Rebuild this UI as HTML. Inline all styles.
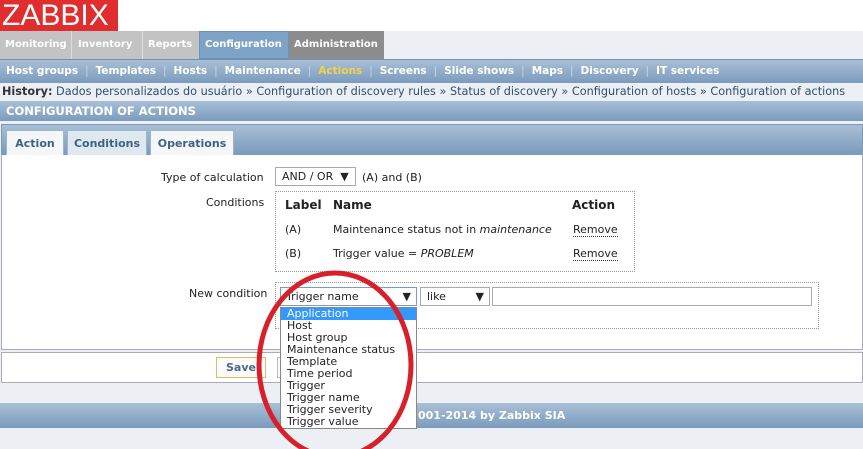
<!DOCTYPE html>
<html><head><meta charset="utf-8"><style>
*{margin:0;padding:0;box-sizing:border-box}
body{width:863px;height:449px;overflow:hidden;background:#eceff3;font-family:"DejaVu Sans","Liberation Sans",sans-serif;font-size:11px;color:#222;position:relative}
.a{position:absolute;white-space:nowrap}
.grad{background:linear-gradient(#a9bfd6,#7b9bbd)}
.b{font-weight:bold}
.s{color:#c8d6e4;font-weight:normal}
</style></head><body>
<div class="a" style="left:0;top:0;width:863px;height:31px;background:#fff"></div>
<div class="a" style="left:0;top:0;width:118px;height:31px;background:#e12d2d;color:#fff;font-family:'Liberation Sans',sans-serif;font-size:30px;line-height:31px;padding-left:2px">ZABBIX</div>
<!-- top tabs -->
<div class="a" style="left:0;top:31px;width:384px;height:28px;background:#c3c3c3"></div>
<div class="a b" style="left:0;top:31px;height:28px;line-height:28px;color:#fff;font-size:10px">
<span class="a" style="left:5px">Monitoring</span>
<span class="a" style="left:78px">Inventory</span>
<span class="a" style="left:148px">Reports</span>
</div>
<div class="a" style="left:71px;top:31px;width:1px;height:28px;background:#ddd"></div>
<div class="a" style="left:142px;top:31px;width:1px;height:28px;background:#ddd"></div>
<div class="a" style="left:199px;top:31px;width:90px;height:28px;background:#7fa3c6;border:1px solid #6d92b7"></div>
<div class="a b" style="left:205px;top:31px;line-height:28px;color:#fff;font-size:10px">Configuration</div>
<div class="a" style="left:289px;top:31px;width:95px;height:28px;background:#8c8c8c"></div>
<div class="a b" style="left:294px;top:31px;line-height:28px;color:#fff;font-size:10px">Administration</div>
<!-- sub menu -->
<div class="a grad" style="left:0;top:59px;width:863px;height:24px;border-top:1px solid #6d92b7"></div>
<div class="a b" style="left:6px;top:59px;line-height:24px;color:#fff;font-size:10.5px">Host groups <span class="s">&nbsp;|&nbsp;</span> Templates <span class="s">&nbsp;|&nbsp;</span> Hosts <span class="s">&nbsp;|&nbsp;</span> Maintenance <span class="s">&nbsp;|&nbsp;</span> <span style="color:#f2d34a">Actions</span> <span class="s">&nbsp;|&nbsp;</span> Screens <span class="s">&nbsp;|&nbsp;</span> Slide shows <span class="s">&nbsp;|&nbsp;</span> Maps <span class="s">&nbsp;|&nbsp;</span> Discovery <span class="s">&nbsp;|&nbsp;</span> IT services</div>
<!-- history -->
<div class="a" style="left:2px;top:84px;line-height:16px;color:#2e4e72;font-size:11.25px"><b style="color:#333">History:</b> Dados personalizados do usuário » Configuration of discovery rules » Status of discovery » Configuration of hosts » Configuration of actions</div>
<!-- header -->
<div class="a grad" style="left:0;top:101px;width:863px;height:20px"></div>
<div class="a b" style="left:6px;top:101px;line-height:20px;color:#fff;font-size:11.5px">CONFIGURATION OF ACTIONS</div>
<!-- tabs area -->
<div class="a grad" style="left:1px;top:124px;width:862px;height:31px;border:1px solid #7d9bbb"></div>
<div class="a b" style="left:6px;top:130px;width:58px;height:25px;background:#f4f6f8;border:1px solid #9fb5cc;border-bottom:none;text-align:center;line-height:25px;color:#3d6288">Action</div>
<div class="a b" style="left:67px;top:130px;width:80px;height:25px;background:#dfe7ef;border:1px solid #9fb5cc;border-bottom:none;text-align:center;line-height:25px;color:#3d6288">Conditions</div>
<div class="a b" style="left:150px;top:130px;width:84px;height:25px;background:#f4f6f8;border:1px solid #9fb5cc;border-bottom:none;text-align:center;line-height:25px;color:#3d6288">Operations</div>
<!-- form -->
<div class="a" style="left:1px;top:155px;width:862px;height:195px;background:#fff;border:1px solid #aab;border-top:none"></div>
<div class="a" style="left:161px;top:171px">Type of calculation</div>
<div class="a" style="left:275px;top:167px;width:81px;height:19px;border:1px solid #aaa;background:#fff;padding-left:6px;line-height:17px">AND / OR&nbsp; ▼</div>
<div class="a" style="left:362px;top:171px">(A) and (B)</div>
<div class="a" style="left:206px;top:196px">Conditions</div>
<div class="a" style="left:275px;top:191px;width:360px;height:81px;border:1px dotted #999"></div>
<div class="a b" style="left:285px;top:198px;font-size:12px">Label</div>
<div class="a b" style="left:333px;top:198px;font-size:12px">Name</div>
<div class="a b" style="left:572px;top:198px;font-size:12px">Action</div>
<div class="a" style="left:285px;top:223px">(A)</div>
<div class="a" style="left:333px;top:223px">Maintenance status not in <i>maintenance</i></div>
<div class="a" style="left:573px;top:223px;border-bottom:1px dotted #333;line-height:13px">Remove</div>
<div class="a" style="left:285px;top:247px">(B)</div>
<div class="a" style="left:333px;top:247px">Trigger value = <i>PROBLEM</i></div>
<div class="a" style="left:573px;top:247px;border-bottom:1px dotted #333;line-height:13px">Remove</div>
<div class="a" style="left:189px;top:287px">New condition</div>
<div class="a" style="left:275px;top:282px;width:544px;height:47px;border:1px dotted #999"></div>
<div class="a" style="left:280px;top:287px;width:137px;height:19px;border:1px solid #7a9cc4;background:#fff;padding-left:5px;line-height:17px">Trigger name<span style="position:absolute;right:5px">▼</span></div>
<div class="a" style="left:420px;top:287px;width:70px;height:19px;border:1px solid #aaa;background:#fff;padding-left:6px;line-height:17px">like<span style="position:absolute;right:5px">▼</span></div>
<div class="a" style="left:492px;top:287px;width:320px;height:19px;border:1px solid #aaa;background:#fff"></div>
<!-- save row -->
<div class="a" style="left:1px;top:352px;width:862px;height:31px;background:#fff;border:1px solid #aab"></div>
<div class="a b" style="left:216px;top:357px;width:50px;height:21px;border:1px solid #e8b860;background:#fbfbfb;text-align:center;line-height:19px;color:#4a6a8c">Save</div>
<div class="a" style="left:277px;top:357px;width:20px;height:21px;border:1px solid #bbb;background:#fbfbfb"></div>
<!-- footer -->
<div class="a grad" style="left:0;top:403px;width:863px;height:25px"></div>
<div class="a b" style="left:418px;top:403px;line-height:25px;color:#fff">001-2014 by Zabbix SIA</div>
<!-- dropdown list -->
<div class="a" style="left:280px;top:307px;width:137px;height:122px;background:#fff;border:1px solid #888;font-size:11px;line-height:12px">
<div style="background:#3399ff;color:#fff;padding-left:6px">Application</div>
<div style="padding-left:6px">Host</div>
<div style="padding-left:6px">Host group</div>
<div style="padding-left:6px">Maintenance status</div>
<div style="padding-left:6px">Template</div>
<div style="padding-left:6px">Time period</div>
<div style="padding-left:6px">Trigger</div>
<div style="padding-left:6px">Trigger name</div>
<div style="padding-left:6px">Trigger severity</div>
<div style="padding-left:6px">Trigger value</div>
</div>
<!-- red ellipse -->
<svg class="a" style="left:0;top:0" width="863" height="449"><ellipse cx="335" cy="365" rx="76" ry="92" fill="none" stroke="#d8202a" stroke-width="5"/></svg>
</body></html>
